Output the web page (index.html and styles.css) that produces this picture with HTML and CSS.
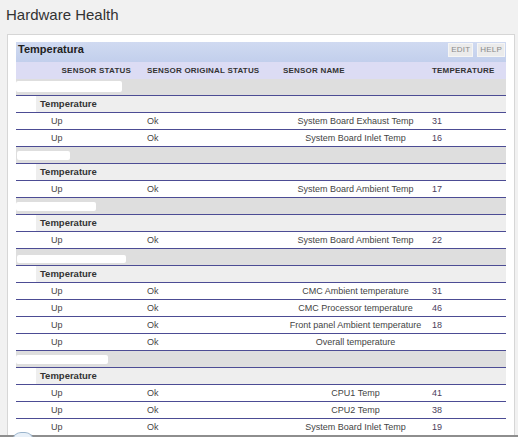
FILE: index.html
```html
<!DOCTYPE html>
<html>
<head>
<meta charset="utf-8">
<title>Hardware Health</title>
<link rel="stylesheet" href="styles.css">
</head>
<body>
<h1 class="page-title">Hardware Health</h1>
<div class="panel">
  <div class="bar">
    <div class="bar-title">Temperatura</div>
    <div class="bar-actions">
      <span class="btn">EDIT</span>
      <span class="btn">HELP</span>
    </div>
  </div>
  <div class="grid cols">
    <div class="c-status">SENSOR STATUS</div>
    <div>SENSOR ORIGINAL STATUS</div>
    <div>SENSOR NAME</div>
    <div>TEMPERATURE</div>
  </div>

  <div class="host"><span class="redact r1"></span></div>
  <div class="group"><div class="group-label">Temperature</div></div>
  <div class="grid row"><span></span><span>Up</span><span>Ok</span><span class="name">System Board Exhaust Temp</span><span class="val">31</span></div>
  <div class="grid row"><span></span><span>Up</span><span>Ok</span><span class="name">System Board Inlet Temp</span><span class="val">16</span></div>

  <div class="host"><span class="redact r2"></span></div>
  <div class="group"><div class="group-label">Temperature</div></div>
  <div class="grid row"><span></span><span>Up</span><span>Ok</span><span class="name">System Board Ambient Temp</span><span class="val">17</span></div>

  <div class="host"><span class="redact r3"></span></div>
  <div class="group"><div class="group-label">Temperature</div></div>
  <div class="grid row"><span></span><span>Up</span><span>Ok</span><span class="name">System Board Ambient Temp</span><span class="val">22</span></div>

  <div class="host"><span class="redact r4"></span></div>
  <div class="group"><div class="group-label">Temperature</div></div>
  <div class="grid row"><span></span><span>Up</span><span>Ok</span><span class="name">CMC Ambient temperature</span><span class="val">31</span></div>
  <div class="grid row"><span></span><span>Up</span><span>Ok</span><span class="name">CMC Processor temperature</span><span class="val">46</span></div>
  <div class="grid row"><span></span><span>Up</span><span>Ok</span><span class="name">Front panel Ambient temperature</span><span class="val">18</span></div>
  <div class="grid row"><span></span><span>Up</span><span>Ok</span><span class="name">Overall temperature</span><span class="val"></span></div>

  <div class="host"><span class="redact r5"></span></div>
  <div class="group"><div class="group-label">Temperature</div></div>
  <div class="grid row"><span></span><span>Up</span><span>Ok</span><span class="name">CPU1 Temp</span><span class="val">41</span></div>
  <div class="grid row"><span></span><span>Up</span><span>Ok</span><span class="name">CPU2 Temp</span><span class="val">38</span></div>
  <div class="grid row"><span></span><span>Up</span><span>Ok</span><span class="name">System Board Inlet Temp</span><span class="val">19</span></div>
</div>
<div class="dock"><span class="orb"></span></div>
</body>
</html>
```
FILE: styles.css
```css
html, body {
  margin: 0;
  padding: 0;
}
body {
  background: #f1f1f1;
  font-family: "Liberation Sans", Arial, sans-serif;
  color: #333;
  overflow: hidden;
}
.page-title {
  margin: 0 0 10px 0;
  padding: 6px 0 0 6px;
  height: 18px;
  font-size: 15px;
  line-height: 18px;
  font-weight: normal;
  color: #333;
}
.panel {
  margin: 0 3px 0 7px;
  background: #fff;
  border: 1px solid #d6d6d6;
  padding: 7px 8px 0 8px;
}
.bar {
  display: flex;
  align-items: flex-start;
  height: 20px;
  background: linear-gradient(#d0daf1, #c2cfec);
}
.bar-title {
  font-size: 11px;
  font-weight: bold;
  line-height: 15px;
  padding-left: 2px;
  color: #222;
}
.bar-actions {
  margin-left: auto;
  display: flex;
  gap: 4px;
  padding-top: 1px;
  padding-right: 1px;
}
.btn {
  font-size: 8px;
  color: #8a8a8a;
  background: #ebebeb;
  border: 1px solid #f5f5f5;
  height: 12px;
  line-height: 12px;
  padding: 0 2px;
  letter-spacing: 0.2px;
}
.grid {
  display: grid;
  grid-template-columns: 35px 96px 136px 145px 78px;
}
.cols {
  background: #dcdcf4;
  height: 17px;
  font-size: 8px;
  font-weight: bold;
  letter-spacing: 0.2px;
  line-height: 17px;
  color: #333;
  white-space: nowrap;
}
.cols .c-status {
  grid-column: 1 / span 2;
  text-align: right;
  padding-right: 16px;
}
.cols > div:last-child {
  padding-left: 4px;
}
.host {
  display: flow-root;
  box-sizing: border-box;
  height: 17px;
  background: #dedede;
  border-bottom: 1px solid #4c4c94;
}
.redact {
  display: block;
  background: #fff;
  border-radius: 2px;
}
.r1 { width: 106px; height: 11px; margin-top: 2px; }
.r2 { width: 53px; height: 9px; margin: 4px 0 0 1px; }
.r3 { width: 80px; height: 9px; margin-top: 4px; }
.r4 { width: 109px; height: 8px; margin: 6px 0 0 1px; }
.r5 { width: 92px; height: 9px; margin-top: 4px; }
.group {
  box-sizing: border-box;
  height: 17px;
  border-bottom: 1px solid #4c4c94;
  padding-left: 20px;
}
.group-label {
  height: 16px;
  background: #eeeeee;
  padding-left: 4px;
  font-size: 9.5px;
  font-weight: bold;
  line-height: 16px;
  color: #333;
}
.row {
  box-sizing: border-box;
  height: 17px;
  border-bottom: 1px solid #4c4c94;
  font-size: 9px;
  line-height: 16px;
  color: #444;
  white-space: nowrap;
}
.row .name {
  text-align: center;
}
.row .val {
  padding-left: 4px;
  color: #4a3d5c;
}
.dock {
  position: fixed;
  left: 0;
  right: 0;
  bottom: 0;
  height: 2px;
  background: #8e8e8e;
}
.orb {
  position: absolute;
  left: 12px;
  top: -3px;
  width: 20px;
  height: 8px;
  border: 1px solid #9ab4cc;
  border-bottom: none;
  border-radius: 10px 10px 0 0;
  background: #e8f0f8;
}
```
